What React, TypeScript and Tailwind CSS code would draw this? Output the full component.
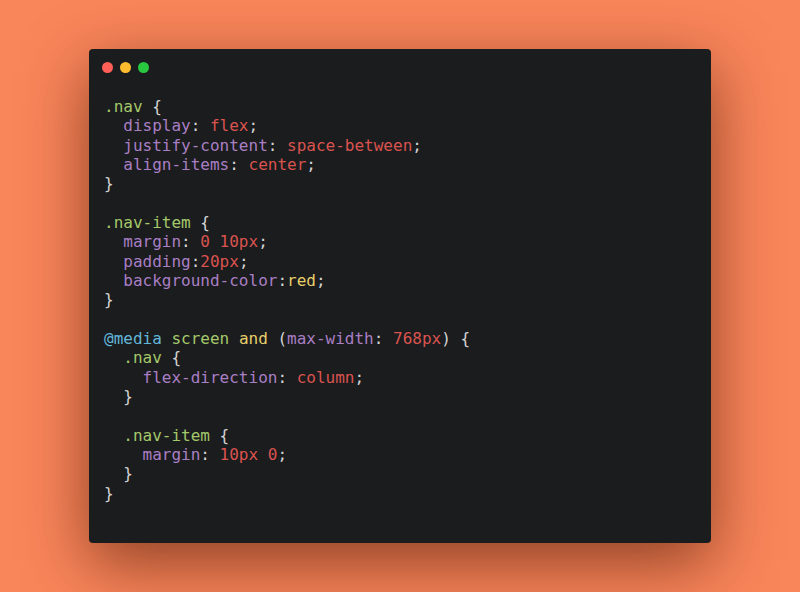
import React from "react";

type Tok = [string, string];

const W = "text-[#d4d4d4]";
const SEL = "text-[#a4c86a]";
const PROP = "text-[#a97fc4]";
const VAL = "text-[#d9534f]";
const YEL = "text-[#e8cf6a]";
const AT = "text-[#62b6d8]";

const lines: Tok[][] = [
  [[".nav", SEL], [" {", W]],
  [["  display", PROP], [": ", W], ["flex", VAL], [";", W]],
  [["  justify-content", PROP], [": ", W], ["space-between", VAL], [";", W]],
  [["  align-items", PROP], [": ", W], ["center", VAL], [";", W]],
  [["}", W]],
  [],
  [[".nav-item", SEL], [" {", W]],
  [["  margin", PROP], [": ", W], ["0 10px", VAL], [";", W]],
  [["  padding", PROP], [":", W], ["20px", VAL], [";", W]],
  [["  background-color", PROP], [":", W], ["red", YEL], [";", W]],
  [["}", W]],
  [],
  [["@media", AT], [" ", W], ["screen", SEL], [" ", W], ["and", YEL], [" (", W], ["max-width", PROP], [": ", W], ["768px", VAL], [") {", W]],
  [["  .nav", SEL], [" {", W]],
  [["    flex-direction", PROP], [": ", W], ["column", VAL], [";", W]],
  [["  }", W]],
  [],
  [["  .nav-item", SEL], [" {", W]],
  [["    margin", PROP], [": ", W], ["10px 0", VAL], [";", W]],
  [["  }", W]],
  [["}", W]],
];

export default function App() {
  return (
    <div className="w-full h-[592px] bg-[#f9855a] flex items-center justify-center">
      <div className="w-[622px] h-[494px] bg-[#1b1c1e] rounded-[4px] shadow-[0_20px_64px_rgba(70,20,0,0.6)] pt-[13px] pl-[15px]">
        <div className="flex gap-[7px] -ml-[2px]">
          <span className="w-[11px] h-[11px] rounded-full bg-[#ff5f57]" />
          <span className="w-[11px] h-[11px] rounded-full bg-[#febc2e]" />
          <span className="w-[11px] h-[11px] rounded-full bg-[#28c840]" />
        </div>
        <pre
          className="mt-[24px] text-[16px] leading-[19.33px]"
          style={{ fontFamily: '"DejaVu Sans Mono", "Liberation Mono", monospace' }}
        >
          {lines.map((toks, i) => (
            <div key={i} className="h-[19.33px]">
              {toks.map(([t, c], j) => (
                <span key={j} className={c}>
                  {t}
                </span>
              ))}
            </div>
          ))}
        </pre>
      </div>
    </div>
  );
}
